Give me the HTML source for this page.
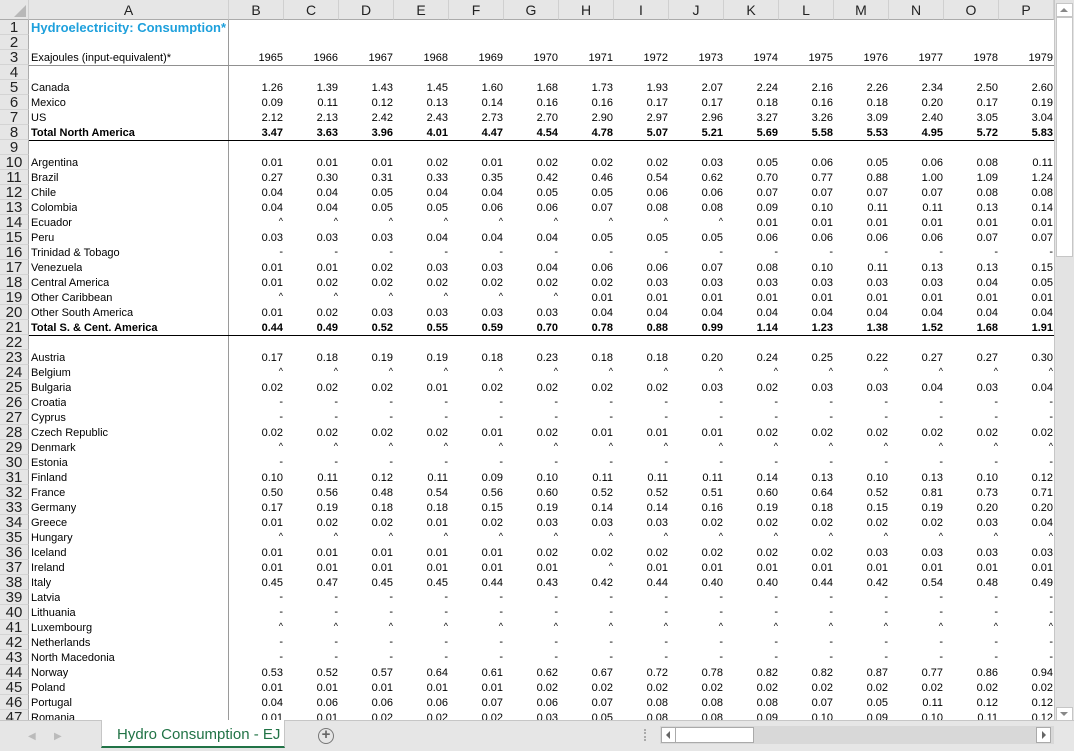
<!DOCTYPE html>
<html><head><meta charset="utf-8">
<style>
*{margin:0;padding:0;box-sizing:border-box}
body{width:1074px;height:751px;overflow:hidden;background:#fff;font-family:"Liberation Sans",Arial,sans-serif;position:relative}
.a{position:absolute;white-space:nowrap}
.rh{position:absolute;left:0;width:29px;height:15px;background:#e6e6e6;border-bottom:1px solid #d4d4d4;border-right:1px solid #ababab;font-size:15px;line-height:15px;text-align:center;color:#222}
.ch{position:absolute;top:0;height:20px;background:#e6e6e6;border-right:1px solid #d0d0d0;border-bottom:1px solid #ababab;font-size:14px;line-height:20px;text-align:center;color:#222}
.c{position:absolute;height:15px;font-size:11px;line-height:16px;color:#000;overflow:hidden}
.n{text-align:right;width:55px;padding-right:1px}
.b{font-weight:bold}
</style></head><body>
<div id="g" class="a" style="left:0;top:0;width:1054px;height:720px;overflow:hidden"></div>
<!-- vertical scrollbar -->
<div class="a" style="left:1054px;top:0;width:20px;height:720px;background:#e3e3e3;border-left:1px solid #c6c6c6"></div>
<div class="a" style="left:1056px;top:3px;width:17px;height:14px;background:#fff;border:1px solid #c6c6c6"></div>
<div class="a" style="left:1060px;top:8px;width:0;height:0;border-left:4px solid transparent;border-right:4px solid transparent;border-bottom:4px solid #888"></div>
<div class="a" style="left:1056px;top:17px;width:17px;height:240px;background:#fff;border:1px solid #c6c6c6"></div>
<div class="a" style="left:1056px;top:707px;width:17px;height:14px;background:#fff;border:1px solid #c6c6c6"></div>
<div class="a" style="left:1060px;top:712px;width:0;height:0;border-left:4px solid transparent;border-right:4px solid transparent;border-top:4px solid #888"></div>
<!-- bottom bar -->
<div class="a" style="left:0;top:720px;width:1074px;height:31px;background:#e6e6e6;border-top:1px solid #c6c6c6"></div>
<div class="a" style="left:28px;top:731px;font-size:10px;color:#bbb">&#9664;</div>
<div class="a" style="left:54px;top:731px;font-size:10px;color:#bbb">&#9654;</div>
<div class="a" style="left:101px;top:720px;width:184px;height:28px;background:#fff;border-left:1px solid #c6c6c6;border-right:1px solid #c6c6c6;border-bottom:2px solid #217346"></div>
<div class="a" style="left:117px;top:726px;font-size:15px;color:#217346">Hydro Consumption - EJ</div>
<div class="a" style="left:318px;top:728px;width:16px;height:16px;border:1.5px solid #777;border-radius:50%;font-size:15px;line-height:12px;text-align:center;color:#666;font-weight:bold">+</div>
<div class="a" style="left:644px;top:729px;width:2px;height:12px;border-left:2px dotted #aaa"></div>
<div class="a" style="left:660px;top:726px;width:394px;height:18px;background:#d8d8d8"></div>
<div class="a" style="left:661px;top:727px;width:93px;height:16px;background:#fff;border:1px solid #aaa"></div>
<div class="a" style="left:661px;top:727px;width:15px;height:16px;border-right:1px solid #aaa"></div>
<div class="a" style="left:666px;top:731px;width:0;height:0;border-top:4px solid transparent;border-bottom:4px solid transparent;border-right:4px solid #666"></div>
<div class="a" style="left:1036px;top:727px;width:15px;height:16px;background:#fff;border:1px solid #aaa"></div>
<div class="a" style="left:1042px;top:731px;width:0;height:0;border-top:4px solid transparent;border-bottom:4px solid transparent;border-left:4px solid #666"></div>
<script>
var g=document.getElementById('g'),h='';
var cols='BCDEFGHIJKLMNOP';
h+='<div class="ch" style="left:0;width:29px"><div style="position:absolute;right:2px;bottom:2px;width:0;height:0;border-left:12px solid transparent;border-bottom:12px solid #b8b8b8"></div></div>';
h+='<div class="ch" style="left:29px;width:200px">A</div>';
for(var i=0;i<15;i++)h+='<div class="ch" style="left:'+(229+i*55)+'px;width:55px">'+cols[i]+'</div>';
for(var r=1;r<=47;r++)h+='<div class="rh" style="top:'+(20+(r-1)*15)+'px">'+r+'</div>';
h+='<div class="a" style="left:228px;top:20px;width:1px;height:700px;background:#9a9a9a"></div>';
function t(r){return 20+(r-1)*15}
h+='<div class="c" style="left:31px;top:'+(t(1)-1)+'px;font-size:13px;font-weight:bold;color:#1ea0dc;line-height:17px">Hydroelectricity: Consumption*</div>';
h+='<div class="a" style="left:29px;top:65px;width:1025px;height:1px;background:#909090"></div>';
h+='<div class="a" style="left:29px;top:140px;width:1025px;height:1px;background:#000"></div>';
h+='<div class="a" style="left:29px;top:335px;width:1025px;height:1px;background:#000"></div>';
var D=[
[3,'Exajoules (input-equivalent)*','1965 1966 1967 1968 1969 1970 1971 1972 1973 1974 1975 1976 1977 1978 1979'],
[5,'Canada','1.26 1.39 1.43 1.45 1.60 1.68 1.73 1.93 2.07 2.24 2.16 2.26 2.34 2.50 2.60'],
[6,'Mexico','0.09 0.11 0.12 0.13 0.14 0.16 0.16 0.17 0.17 0.18 0.16 0.18 0.20 0.17 0.19'],
[7,'US','2.12 2.13 2.42 2.43 2.73 2.70 2.90 2.97 2.96 3.27 3.26 3.09 2.40 3.05 3.04'],
[8,'Total North America','3.47 3.63 3.96 4.01 4.47 4.54 4.78 5.07 5.21 5.69 5.58 5.53 4.95 5.72 5.83',1],
[10,'Argentina','0.01 0.01 0.01 0.02 0.01 0.02 0.02 0.02 0.03 0.05 0.06 0.05 0.06 0.08 0.11'],
[11,'Brazil','0.27 0.30 0.31 0.33 0.35 0.42 0.46 0.54 0.62 0.70 0.77 0.88 1.00 1.09 1.24'],
[12,'Chile','0.04 0.04 0.05 0.04 0.04 0.05 0.05 0.06 0.06 0.07 0.07 0.07 0.07 0.08 0.08'],
[13,'Colombia','0.04 0.04 0.05 0.05 0.06 0.06 0.07 0.08 0.08 0.09 0.10 0.11 0.11 0.13 0.14'],
[14,'Ecuador','^ ^ ^ ^ ^ ^ ^ ^ ^ 0.01 0.01 0.01 0.01 0.01 0.01'],
[15,'Peru','0.03 0.03 0.03 0.04 0.04 0.04 0.05 0.05 0.05 0.06 0.06 0.06 0.06 0.07 0.07'],
[16,'Trinidad & Tobago','- - - - - - - - - - - - - - -'],
[17,'Venezuela','0.01 0.01 0.02 0.03 0.03 0.04 0.06 0.06 0.07 0.08 0.10 0.11 0.13 0.13 0.15'],
[18,'Central America','0.01 0.02 0.02 0.02 0.02 0.02 0.02 0.03 0.03 0.03 0.03 0.03 0.03 0.04 0.05'],
[19,'Other Caribbean','^ ^ ^ ^ ^ ^ 0.01 0.01 0.01 0.01 0.01 0.01 0.01 0.01 0.01'],
[20,'Other South America','0.01 0.02 0.03 0.03 0.03 0.03 0.04 0.04 0.04 0.04 0.04 0.04 0.04 0.04 0.04'],
[21,'Total S. & Cent. America','0.44 0.49 0.52 0.55 0.59 0.70 0.78 0.88 0.99 1.14 1.23 1.38 1.52 1.68 1.91',1],
[23,'Austria','0.17 0.18 0.19 0.19 0.18 0.23 0.18 0.18 0.20 0.24 0.25 0.22 0.27 0.27 0.30'],
[24,'Belgium','^ ^ ^ ^ ^ ^ ^ ^ ^ ^ ^ ^ ^ ^ ^'],
[25,'Bulgaria','0.02 0.02 0.02 0.01 0.02 0.02 0.02 0.02 0.03 0.02 0.03 0.03 0.04 0.03 0.04'],
[26,'Croatia','- - - - - - - - - - - - - - -'],
[27,'Cyprus','- - - - - - - - - - - - - - -'],
[28,'Czech Republic','0.02 0.02 0.02 0.02 0.01 0.02 0.01 0.01 0.01 0.02 0.02 0.02 0.02 0.02 0.02'],
[29,'Denmark','^ ^ ^ ^ ^ ^ ^ ^ ^ ^ ^ ^ ^ ^ ^'],
[30,'Estonia','- - - - - - - - - - - - - - -'],
[31,'Finland','0.10 0.11 0.12 0.11 0.09 0.10 0.11 0.11 0.11 0.14 0.13 0.10 0.13 0.10 0.12'],
[32,'France','0.50 0.56 0.48 0.54 0.56 0.60 0.52 0.52 0.51 0.60 0.64 0.52 0.81 0.73 0.71'],
[33,'Germany','0.17 0.19 0.18 0.18 0.15 0.19 0.14 0.14 0.16 0.19 0.18 0.15 0.19 0.20 0.20'],
[34,'Greece','0.01 0.02 0.02 0.01 0.02 0.03 0.03 0.03 0.02 0.02 0.02 0.02 0.02 0.03 0.04'],
[35,'Hungary','^ ^ ^ ^ ^ ^ ^ ^ ^ ^ ^ ^ ^ ^ ^'],
[36,'Iceland','0.01 0.01 0.01 0.01 0.01 0.02 0.02 0.02 0.02 0.02 0.02 0.03 0.03 0.03 0.03'],
[37,'Ireland','0.01 0.01 0.01 0.01 0.01 0.01 ^ 0.01 0.01 0.01 0.01 0.01 0.01 0.01 0.01'],
[38,'Italy','0.45 0.47 0.45 0.45 0.44 0.43 0.42 0.44 0.40 0.40 0.44 0.42 0.54 0.48 0.49'],
[39,'Latvia','- - - - - - - - - - - - - - -'],
[40,'Lithuania','- - - - - - - - - - - - - - -'],
[41,'Luxembourg','^ ^ ^ ^ ^ ^ ^ ^ ^ ^ ^ ^ ^ ^ ^'],
[42,'Netherlands','- - - - - - - - - - - - - - -'],
[43,'North Macedonia','- - - - - - - - - - - - - - -'],
[44,'Norway','0.53 0.52 0.57 0.64 0.61 0.62 0.67 0.72 0.78 0.82 0.82 0.87 0.77 0.86 0.94'],
[45,'Poland','0.01 0.01 0.01 0.01 0.01 0.02 0.02 0.02 0.02 0.02 0.02 0.02 0.02 0.02 0.02'],
[46,'Portugal','0.04 0.06 0.06 0.06 0.07 0.06 0.07 0.08 0.08 0.08 0.07 0.05 0.11 0.12 0.12'],
[47,'Romania','0.01 0.01 0.02 0.02 0.02 0.03 0.05 0.08 0.08 0.09 0.10 0.09 0.10 0.11 0.12']];
D.forEach(function(d){
 var y=t(d[0]),b=d[3]?' b':'';
 h+='<div class="c'+b+'" style="left:31px;top:'+y+'px">'+d[1].replace('&','&amp;')+'</div>';
 d[2].split(' ').forEach(function(v,i){
  var st='';
  if(v=='^'){st='font-size:9px;line-height:13px;';}
  if(v=='-'){st='line-height:14px;';}
  h+='<div class="c n'+b+'" style="'+st+'left:'+(229+i*55)+'px;top:'+y+'px">'+v+'</div>';
 });
});
g.innerHTML=h;
</script>
</body></html>
